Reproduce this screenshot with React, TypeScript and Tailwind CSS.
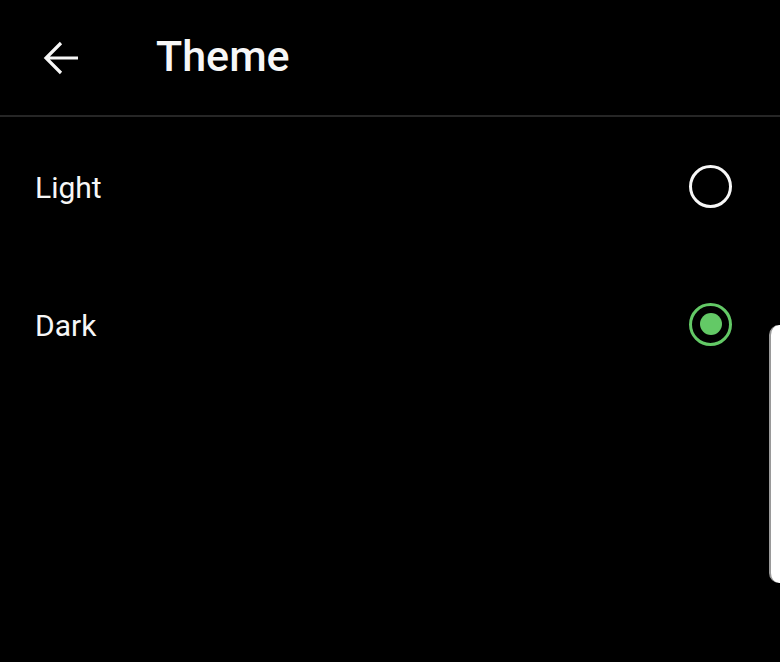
import React from "react";

export default function App() {
  return (
    <div
      className="relative w-[780px] h-[662px] bg-black overflow-hidden text-[#f7f7f7]"
      style={{ fontFamily: "Roboto, 'Noto Sans', sans-serif" }}
    >
      <div className="h-[115px] flex items-center">
        <div className="w-[156px] flex items-center pl-[42px]">
          <svg width="38" height="38" viewBox="0 0 38 38" fill="none">
            <path
              d="M36 19H4M19 4L4 19l15 15"
              stroke="#f7f7f7"
              strokeWidth="3.2"
              strokeLinecap="butt"
              strokeLinejoin="miter"
            />
          </svg>
        </div>
        <div className="text-[43px] font-medium leading-none mt-[-2px]">Theme</div>
      </div>
      <div className="h-[2px] bg-[#262626]" />
      <div className="flex flex-col">
        <div className="h-[138px] flex items-center justify-between pl-[35px] pr-[48px]">
          <span className="text-[30px] leading-none mt-[3px]">Light</span>
          <div className="w-[43px] h-[43px] rounded-full border-[3px] border-[#f7f7f7]" />
        </div>
        <div className="h-[138px] flex items-center justify-between pl-[35px] pr-[48px]">
          <span className="text-[30px] leading-none mt-[3px]">Dark</span>
          <div className="w-[43px] h-[43px] rounded-full border-[3px] border-[#63c966] flex items-center justify-center">
            <div className="w-[22px] h-[22px] rounded-full bg-[#63c966]" />
          </div>
        </div>
      </div>
      <div className="absolute left-[769px] top-[325px] w-[30px] h-[258px] bg-white rounded-[10px] border-l-[2px] border-[#9a9a9a]" />
    </div>
  );
}
